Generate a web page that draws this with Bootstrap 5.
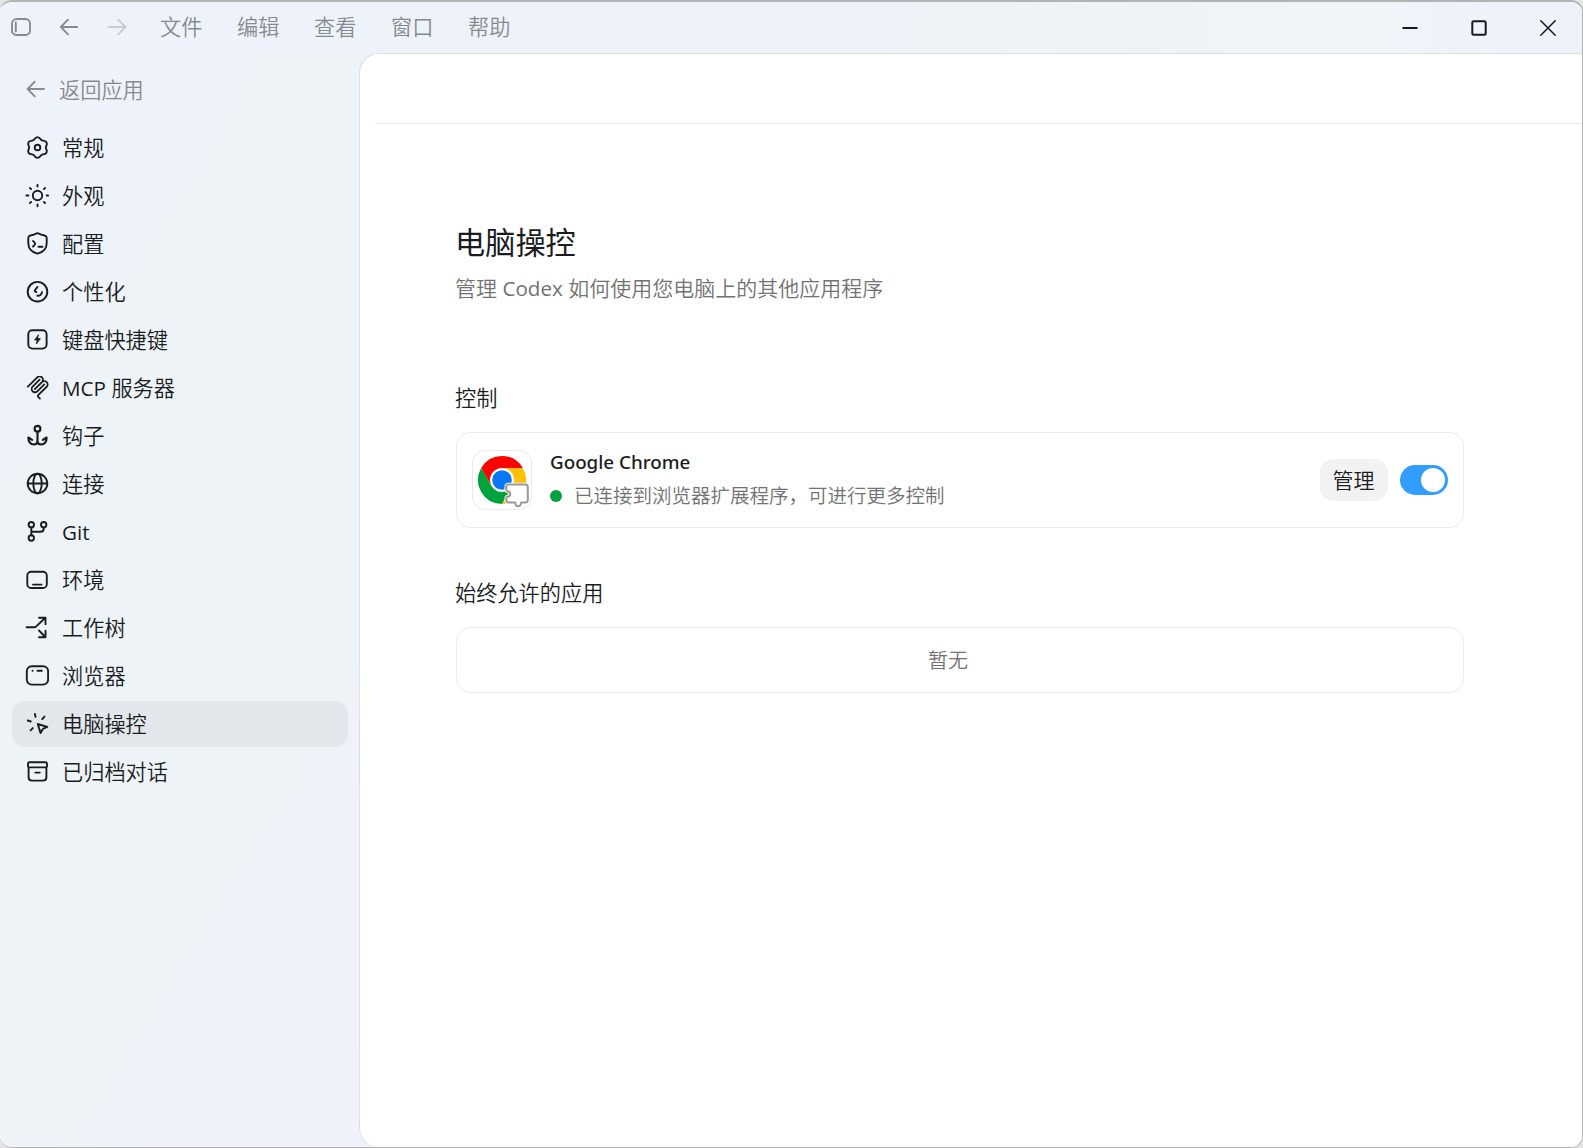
<!DOCTYPE html>
<html lang="zh-CN" data-bs-theme="light">
<head>
<meta charset="utf-8">
<title>电脑操控</title>
<link href="https://cdn.jsdelivr.net/npm/bootstrap@5.3.0/dist/css/bootstrap.min.css" rel="stylesheet">
<script src="https://cdn.jsdelivr.net/npm/bootstrap@5.3.0/dist/js/bootstrap.bundle.min.js" defer></script>
<style>
html,body{height:100%}
body{margin:0;overflow:hidden;background:#e4e4e4;color:#1a1c1f;font-family:"Noto Sans","Noto Sans CJK SC",sans-serif;font-size:21.2px;line-height:28px;font-weight:350}
svg{display:block;flex:none;fill:none;stroke:currentColor;stroke-width:1.9;stroke-linecap:round;stroke-linejoin:round}
.latin{font-family:"Open Sans","Noto Sans",sans-serif;font-weight:400;font-size:20.6px}
.app-window{height:1148px;border:solid #b3b3b3;border-width:2px 1px 1px 0;border-radius:12px;overflow:hidden;background:#eef3fb}
.titlebar{height:51px;color:#878a8f;background:linear-gradient(90deg,#eef3fb 0,#eef3fa 45%,#eef3f8 62%,#eef4f8 87%,#eef3fb 95%)}
.workspace{background:linear-gradient(121.6deg,#eef3fb 0,#eef3fb 160px,#eef3f7 270px,#eef3f7 615px,#eff2fb 700px,#eff3fb 100%)}
.title-icons{gap:28px;padding:0 33px 2px 11px}
.menus{gap:34.6px;padding-bottom:1px}
.win-controls{gap:53px;padding-right:26px;padding-top:1px;color:#17191b}
.sidebar{width:359px;padding:23px 11px 0 12px}
.back-link{height:28px;padding-left:14px;gap:13px;color:#878a8f;margin-bottom:21px}
.side-nav{gap:2px}
.side-nav .nav-link{height:46px;padding:0 0 0 13px;gap:13px;color:#1a1c1f;border-radius:14px}
.side-nav .nav-link.active{background:#e3e7eb}
.main-panel{background:#fff;border:1px solid #dcdfe4;border-right:0;border-bottom:0;border-radius:20px 0 0 20px}
.panel-head{height:70px;border-bottom:1px solid #e8e8e8;margin-left:15px}
.content-col{width:1008px;margin-left:96px;padding-top:98px}
.page-title{font-size:30.2px;line-height:42px;font-weight:400;margin:0 0 10px -1px}
.muted{color:#727272}
.subtitle{font-size:21px;margin:0 0 82px -1px}
.section-title{font-size:21.2px;line-height:28px;margin:0 0 20px -1px;font-weight:350}
.panel-card{border:1px solid #ececec;border-radius:14px}
.chrome-card{height:96px;padding:0 15px 0 15px;margin-bottom:51px}
.app-tile{width:60px;height:60px;border:1px solid #eaeaea;border-radius:13px;margin-right:18px}
.app-name{font:500 18.8px/28px "Noto Sans",sans-serif;margin-bottom:6px;margin-top:-3px}
.status-text{font-size:19.5px;line-height:28px;gap:12px}
.status-dot{width:12px;height:12px;border-radius:50%;background:#05a141}
.btn-manage{width:68px;height:42px;padding:2px 1px 0 0;border:0;border-radius:14px;background:#f2f2f2;font-size:21px;font-weight:350;color:#1a1c1f;margin-right:12px}
.toggle-track{width:48px;height:30px;border-radius:15px;background:#339cff;padding:3px}
.toggle-knob{width:24px;height:24px;border-radius:50%;background:#fff}
.empty-card{height:66px;font-size:20px;padding:2px 24px 0 0}
</style>
</head>
<body>
<div class="app-window d-flex flex-column">
  <header class="titlebar d-flex align-items-center flex-shrink-0">
    <div class="title-icons d-flex align-items-center">
      <svg width="20" height="20" viewBox="0 0 20 20"><rect x="1" y="2" width="18" height="16" rx="4.5"/><path d="M4.800 5.500v9"/></svg>
      <svg width="20" height="20" viewBox="0 0 20 20"><path d="M18.200 10H2M9 2.700 1.800 10 9 17.300"/></svg>
      <svg width="20" height="20" viewBox="0 0 20 20" color="#c8ccd2"><path d="M2 10h16.200M11.300 2.700l7.200 7.300-7.200 7.300"/></svg>
    </div>
    <nav class="menus d-flex"><span>文件</span><span>编辑</span><span>查看</span><span>窗口</span><span>帮助</span></nav>
    <div class="win-controls d-flex ms-auto">
      <svg width="16" height="16" viewBox="0 0 16 16"><path d="M.5 8h15" stroke-width="2" stroke-linecap="butt"/></svg>
      <svg width="16" height="16" viewBox="0 0 16 16"><rect x="1.300" y="1.300" width="13.400" height="13.400" rx="1.500" stroke-width="2"/></svg>
      <svg width="16" height="16" viewBox="0 0 16 16"><path d="m.8.8 14.400 14.400M15.200.8.8 15.200" stroke-width="1.500"/></svg>
    </div>
  </header>
  <div class="workspace d-flex flex-grow-1">
    <aside class="sidebar flex-shrink-0">
      <div class="back-link d-flex align-items-center">
        <svg width="20" height="20" viewBox="0 0 20 20"><path d="M18 9H2M8.800 1.700 1.600 9l7.200 7.300"/></svg><span>返回应用</span>
      </div>
      <nav class="side-nav nav flex-column">
        <a class="nav-link d-flex align-items-center"><svg width="24" height="24" viewBox="0 0 24 24"><path d="M8.350 4.300C9.400 3.700 9.900 1.100 12.500 1.100S15.600 3.700 16.650 4.300C17.700 4.900 20.200 4.050 21.500 6.300S20.800 10.300 20.800 11.500C20.800 12.700 22.800 14.450 21.500 16.700S17.700 18.100 16.650 18.700C15.600 19.300 15.100 21.900 12.500 21.900S9.400 19.300 8.350 18.700C7.300 18.100 4.800 18.950 3.500 16.700S4.200 12.700 4.200 11.500C4.200 10.300 2.200 8.550 3.500 6.300S7.300 4.900 8.350 4.300Z"/><circle cx="12.500" cy="11.500" r="2.800"/></svg><span>常规</span></a>
        <a class="nav-link d-flex align-items-center"><svg width="24" height="24" viewBox="0 0 24 24"><circle cx="12.500" cy="11.500" r="4.700"/><path d="M12.500.9v1.600M12.500 20.500v1.800M1.400 11.500h2M21.600 11.500h1.600M4.900 3.900l1.200 1.200M18.900 17.900l1.200 1.200M4.900 19.100l1.200-1.200M18.900 5.100l1.200-1.200"/></svg><span>外观</span></a>
        <a class="nav-link d-flex align-items-center"><svg width="24" height="24" viewBox="0 0 24 24"><path d="M11.700 1.300q.8-.4 1.600 0c2 1 4.300 1.700 6.300 2.200 1.200.3 2.100 1.100 2.100 2.300v5.400c0 5.300-3.600 9-9.200 10.500C6.900 20.200 3.300 16.500 3.300 11.200V5.800c0-1.200.9-2 2.100-2.300 2-.5 4.300-1.200 6.300-2.200Z"/><path d="M8 9c1 .7 1.800 1.700 2.200 2.800-.4 1.100-1.200 2.100-2.200 2.800M13.500 14.700h4"/></svg><span>配置</span></a>
        <a class="nav-link d-flex align-items-center"><svg width="24" height="24" viewBox="0 0 24 24"><circle cx="12.500" cy="11.700" r="9.800"/><path d="M12.500 6.900C11.500 8.200 10.300 9.300 9.800 10.600c-.3.900.5 1.200 1.500 1.400M12.300 15.700c2.300.3 4.400-1.200 4.700-3.500"/></svg><span>个性化</span></a>
        <a class="nav-link d-flex align-items-center"><svg width="24" height="24" viewBox="0 0 24 24"><rect x="3.300" y="2.300" width="18.300" height="18.300" rx="4"/><path d="m13.300 7-3.700 5h2.600l-.8 4 4-5.400h-2.600Z" fill="currentColor" stroke-width=".8"/></svg><span>键盘快捷键</span></a>
        <a class="nav-link d-flex align-items-center"><svg width="24" height="24" viewBox="0 0 24 24"><g transform="translate(.4 -1) scale(.138)"><path stroke-width="13" style="stroke-width:13" d="M18 84.850 85.880 16.970c9.370-9.370 24.570-9.370 33.940 0s9.370 24.570 0 33.940L68.560 102.180M69.260 101.470l50.560-50.560c9.380-9.370 24.570-9.370 33.950 0l.35.360c9.370 9.370 9.370 24.570 0 33.940L92.720 146.600c-3.120 3.120-3.120 8.190 0 11.310l12.610 12.610M102.850 33.940 52.650 84.150c-9.370 9.370-9.370 24.560 0 33.940 9.370 9.370 24.570 9.370 33.940 0l50.200-50.210"/></g></svg><span><span class="latin">MCP</span> 服务器</span></a>
        <a class="nav-link d-flex align-items-center"><svg width="24" height="24" viewBox="0 0 24 24"><circle cx="12.500" cy="4.700" r="2.900" stroke-width="2.200"/><path stroke-width="2.200" d="M12.500 7.800v9.500c0 2-1.600 3.200-3.700 3.200-3.300 0-5.500-2.700-5.400-7l3.700 2.400M12.500 17.300c0 2 1.600 3.200 3.700 3.200 3.300 0 5.500-2.700 5.400-7l-3.700 2.400"/></svg><span>钩子</span></a>
        <a class="nav-link d-flex align-items-center"><svg width="24" height="24" viewBox="0 0 24 24"><circle cx="12.500" cy="11.500" r="9.800"/><ellipse cx="12.500" cy="11.500" rx="4.200" ry="9.800"/><path d="M2.700 11.500h19.600"/></svg><span>连接</span></a>
        <a class="nav-link d-flex align-items-center"><svg width="24" height="24" viewBox="0 0 24 24"><circle cx="6.300" cy="4.700" r="2.700"/><circle cx="18.700" cy="4.700" r="2.700"/><circle cx="6.300" cy="18" r="2.700"/><path d="M6.300 7.500v7.700M18.700 7.500v1.200c0 1.900-1.100 3-3 3H6.300"/></svg><span class="latin">Git</span></a>
        <a class="nav-link d-flex align-items-center"><svg width="24" height="24" viewBox="0 0 24 24"><rect x="2.300" y="3.700" width="19.500" height="16.300" rx="3.800"/><path d="M8 16.600h8.500"/></svg><span>环境</span></a>
        <a class="nav-link d-flex align-items-center"><svg width="24" height="24" viewBox="0 0 24 24"><path d="M1.600 11.300h7.600c.8 0 1.300-.2 1.800-.7l9.300-8.800M14 1.700h6.500v6.500M14 14.500l6.300 6.500M14 21.200h6.500v-6.500"/></svg><span>工作树</span></a>
        <a class="nav-link d-flex align-items-center"><svg width="24" height="24" viewBox="0 0 24 24"><rect x="1.800" y="2.200" width="21.300" height="18.400" rx="5"/><path d="M7.500 6.800h.1M12.500 6.800h4.300"/></svg><span>浏览器</span></a>
        <a class="nav-link active d-flex align-items-center"><svg width="24" height="24" viewBox="0 0 24 24"><path d="m9.900 2 .6 2.800M19.500 4.600l-2.300 2.500M2.800 8.500l3 1M5.600 18.300l2.200-2.200M12.700 11.800l9.600 3.200-4.400 1.900-2.400 4Z"/></svg><span>电脑操控</span></a>
        <a class="nav-link d-flex align-items-center"><svg width="24" height="24" viewBox="0 0 24 24"><rect x="3" y="2.200" width="19" height="5.200" rx="1.500"/><path d="M3.600 7.400v9.800c0 2.200 1.200 3.400 3.400 3.400h11c2.200 0 3.400-1.200 3.400-3.400V7.400M10.300 12.600h4.500"/></svg><span>已归档对话</span></a>
      </nav>
    </aside>
    <main class="main-panel flex-grow-1">
      <div class="panel-head"></div>
      <div class="content-col">
        <h1 class="page-title">电脑操控</h1>
        <div class="subtitle muted">管理 <span class="latin">Codex</span> 如何使用您电脑上的其他应用程序</div>
        <h2 class="section-title">控制</h2>
        <section class="panel-card chrome-card d-flex align-items-center">
          <div class="app-tile">
            <svg width="58" height="58" viewBox="1 1 58 58" style="stroke:none">
              <path fill="#00a23c" d="M9.200 18A24 24 0 0 0 30 54L40.400 36 30 30 19.600 36Z"/>
              <path fill="#ffc107" d="M50.800 18A24 24 0 0 1 30 54L40.400 36 30 30V18Z"/>
              <path fill="#f90500" d="M50.800 18A24 24 0 0 0 9.200 18L19.600 36 30 30V18Z"/>
              <circle cx="30" cy="30" r="12" fill="#fff"/><circle cx="30" cy="30" r="9.800" fill="#0878f5"/>
              <g fill="#fff" transform="translate(.3 .5)">
                <path d="M36 34h17q2.500 0 2.500 2.500v13q0 2.500-2.500 2.500h-3.500c-.6 0-1 .5-1 1.200a2.600 2.600 0 0 1-5.200 0c0-.7-.4-1.200-1-1.200H36.500q-2.500 0-2.500-2.500v-2c0-.8.5-1.200 1.200-1.300a2.700 2.700 0 0 0 0-5.400c-.7-.1-1.200-.5-1.200-1.300V36q0-2 2-2Z" style="stroke:#fff;stroke-width:3.600"/>
                <path d="M36 34h17q2.500 0 2.500 2.500v13q0 2.500-2.500 2.500h-3.500c-.6 0-1 .5-1 1.200a2.600 2.600 0 0 1-5.200 0c0-.7-.4-1.200-1-1.200H36.500q-2.500 0-2.500-2.500v-2c0-.8.5-1.200 1.200-1.300a2.700 2.700 0 0 0 0-5.400c-.7-.1-1.200-.5-1.200-1.300V36q0-2 2-2Z" style="stroke:#999;stroke-width:2"/>
              </g>
            </svg>
          </div>
          <div>
            <div class="app-name">Google Chrome</div>
            <div class="status-text muted d-flex align-items-center"><i class="status-dot"></i><span>已连接到浏览器扩展程序，可进行更多控制</span></div>
          </div>
          <button class="btn btn-manage ms-auto" type="button">管理</button>
          <div class="toggle-track d-flex justify-content-end" role="switch" aria-checked="true"><div class="toggle-knob"></div></div>
        </section>
        <h2 class="section-title">始终允许的应用</h2>
        <section class="panel-card empty-card muted d-flex align-items-center justify-content-center">暂无</section>
      </div>
    </main>
  </div>
</div>
</body>
</html>
